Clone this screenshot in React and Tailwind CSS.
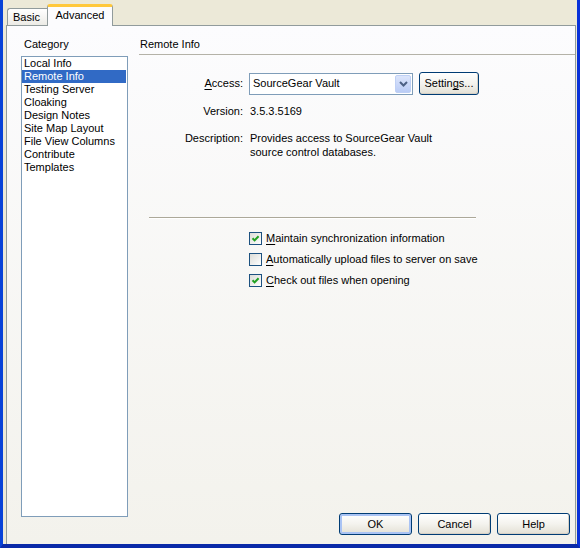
const categories = [
  'Local Info',
  'Remote Info',
  'Testing Server',
  'Cloaking',
  'Design Notes',
  'Site Map Layout',
  'File View Columns',
  'Contribute',
  'Templates',
];

function Key({ children }) {
  return <span className="underline underline-offset-[2px]">{children}</span>;
}

function XpButton({ children, focused, className = '' }) {
  return (
    <button
      className={`flex items-center justify-center rounded-[3px] border border-[#003C74] bg-linear-to-b from-white via-[#F4F3EE] to-[#E3E0D5] text-[11px] leading-[13px] text-black ${
        focused ? 'shadow-[inset_0_0_0_2px_#A9C3F4]' : 'shadow-[inset_-1px_-1px_0_#D6D0C5]'
      } ${className}`}
    >
      {children}
    </button>
  );
}

function Checkbox({ checked, children }) {
  return (
    <div className="flex items-center h-[13px] ml-[110px]">
      <span className="w-[13px] h-[13px] shrink-0 border border-[#1C5180] bg-linear-to-br from-[#DCDCD7] to-white flex items-center justify-center">
        {checked && (
          <svg width="11" height="11" viewBox="0 0 11 11">
            <path d="M2.5 5.2L4.6 7.4L8.6 3.2" stroke="#21A121" strokeWidth="2" fill="none" />
          </svg>
        )}
      </span>
      <span className="ml-[4px] whitespace-nowrap">{children}</span>
    </div>
  );
}

export default function App() {
  return (
    <div className="w-[580px] h-[548px] flex flex-col overflow-hidden bg-[#ECE9D8] border-l-[3px] border-r-[3px] border-b-[4px] border-l-[#0842D8] border-r-[#0831D9] border-b-[#0A2AA8] font-['Liberation_Sans',Arial,sans-serif] text-[11px] leading-[13px] text-black">
      {/* tabs */}
      <div className="h-[25px] shrink-0 flex items-end pl-[4px]">
        <div className="w-[40px] h-[17px] pl-[5px] pt-[2px] border-l border-t border-[#919B9C] rounded-tl-[3px] bg-linear-to-b from-white to-[#ECEBE6]">
          Basic
        </div>
        <div className="relative z-10 -mb-px w-[66px] h-[22px] flex items-center justify-center pb-[2px] border-x border-[#919B9C] border-t-[3px] border-t-[#FFC83C] rounded-t-[3px] bg-[#FCFCFE]">
          Advanced
        </div>
      </div>

      {/* panel */}
      <div className="flex-1 flex ml-[3px] mr-px border-x border-t border-[#919B9C] bg-linear-to-b from-[#FCFCFE] to-[#F3F2EC]">
        <div className="ml-[14px] w-[107px] pt-[12px] flex flex-col">
          <div className="ml-[3px]">Category</div>
          <div className="mt-[5px] h-[461px] border border-[#7F9DB9] bg-white pr-px">
            {categories.map((c) => (
              <div
                key={c}
                className={`h-[13px] pl-[2px] whitespace-nowrap ${
                  c === 'Remote Info' ? 'bg-[#316AC5] text-white' : ''
                }`}
              >
                {c}
              </div>
            ))}
          </div>
        </div>

        <div className="flex-1 ml-[11px] pt-[12px] flex flex-col">
          <div className="pl-px">Remote Info</div>
          <div className="mt-[3px] h-px bg-[#B4B2A8]" />

          <div className="mt-[17px] flex items-center h-[23px]">
            <div className="w-[104px] text-right">
              <Key>A</Key>ccess:
            </div>
            <div className="ml-[6px] w-[164px] h-[22px] border border-[#7F9DB9] bg-white flex items-center">
              <span className="flex-1 pl-[3px]">SourceGear Vault</span>
              <span className="w-[16px] h-[18px] mr-px rounded-[2px] border border-[#BFD0F5] bg-linear-to-b from-[#DCE5FB] to-[#BACCF6] flex items-center justify-center">
                <svg width="9" height="6" viewBox="0 0 9 6">
                  <path d="M1 1L4.5 4.5L8 1" stroke="#4D6185" strokeWidth="2" fill="none" />
                </svg>
              </span>
            </div>
            <XpButton className="ml-[6px] w-[60px] h-[23px]">
              Settin<Key>g</Key>s...
            </XpButton>
          </div>

          <div className="mt-[10px] flex">
            <div className="w-[104px] text-right">Version:</div>
            <div className="ml-[6px] pl-px">3.5.3.5169</div>
          </div>

          <div className="mt-[13px] flex leading-[14px]">
            <div className="w-[104px] text-right">Description:</div>
            <div className="ml-[6px] pl-px">
              <div>Provides access to SourceGear Vault</div>
              <div>source control databases.</div>
            </div>
          </div>

          <div className="mt-[58px] ml-[10px] w-[327px] border-t border-[#ACA899] border-b border-b-white" />

          <div className="mt-[13px] flex flex-col gap-[8px]">
            <Checkbox checked>
              <Key>M</Key>aintain synchronization information
            </Checkbox>
            <Checkbox>
              <Key>A</Key>utomatically upload files to server on save
            </Checkbox>
            <Checkbox checked>
              <Key>C</Key>heck out files when opening
            </Checkbox>
          </div>

          <div className="flex-1" />

          <div className="flex justify-end gap-[6px] pr-[5px] pb-[9px]">
            <XpButton focused className="w-[73px] h-[22px]">OK</XpButton>
            <XpButton className="w-[73px] h-[22px]">Cancel</XpButton>
            <XpButton className="w-[73px] h-[22px]">Help</XpButton>
          </div>
        </div>
      </div>
    </div>
  );
}
